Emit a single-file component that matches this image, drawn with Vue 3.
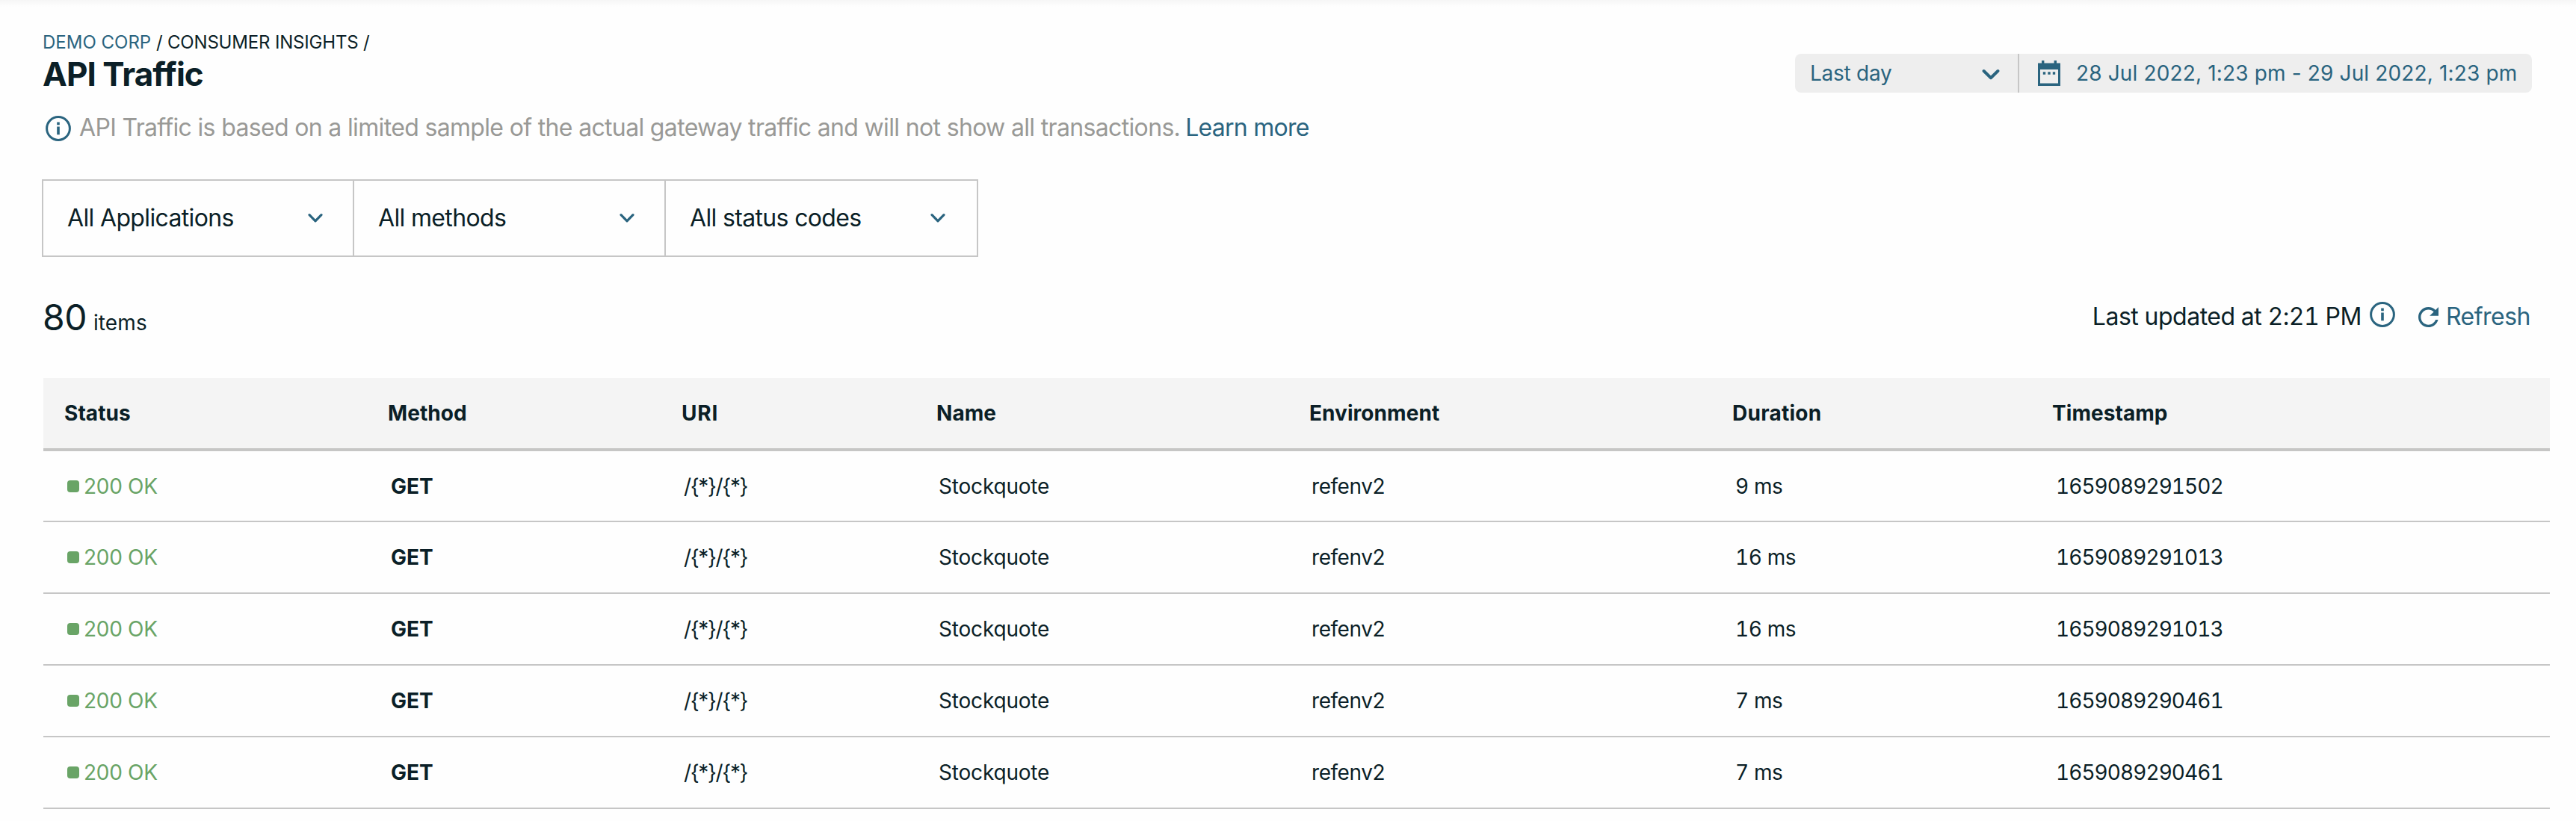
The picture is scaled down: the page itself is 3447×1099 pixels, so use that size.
<script setup>
const filters = [
  { label: 'All Applications', cls: 'apps' },
  { label: 'All methods', cls: 'methods' },
  { label: 'All status codes', cls: 'codes' },
]

const columns = ['Status', 'Method', 'URI', 'Name', 'Environment', 'Duration', 'Timestamp']

const base = { status: '200 OK', method: 'GET', uri: '/{*}/{*}', name: 'Stockquote', env: 'refenv2' }
const rows = [
  { ...base, duration: '9 ms', time: '1659089291502' },
  { ...base, duration: '16 ms', time: '1659089291013' },
  { ...base, duration: '16 ms', time: '1659089291013' },
  { ...base, duration: '7 ms', time: '1659089290461' },
  { ...base, duration: '7 ms', time: '1659089290461' },
]
</script>

<template>
  <div class="page">
    <header class="top">
      <div class="heading">
        <nav class="crumbs"><a class="link">DEMO CORP</a> <span class="trail">/ CONSUMER INSIGHTS /</span></nav>
        <h1>API Traffic</h1>
      </div>
      <div class="picker">
        <div class="range">
          <span>Last day</span>
          <svg class="chev-lg" width="24" height="16" viewBox="0 0 24 16">
            <path d="M2.6 3 12 12.2 21.4 3" fill="none" stroke="currentColor" stroke-width="4" stroke-linecap="round" stroke-linejoin="round" />
          </svg>
        </div>
        <div class="dates">
          <svg width="30" height="34" viewBox="0 0 30 34" fill="currentColor">
            <path fill-rule="evenodd" d="M5 0h3.4v3.6h13.2V0H25v3.6h5V34H0V3.6h5zM3 12v18.6h24V12z" />
            <path d="M6.8 15.2h3.4v3.6H6.8zM13.3 15.2h3.4v3.6h-3.4zM19.8 15.2h3.4v3.6h-3.4z" />
          </svg>
          <span>28 Jul 2022, 1:23 pm - 29 Jul 2022, 1:23 pm</span>
        </div>
      </div>
    </header>

    <div class="notice">
      <svg class="info" width="34" height="34" viewBox="0 0 34 34">
        <circle cx="17" cy="17" r="15.4" fill="none" stroke="currentColor" stroke-width="3" />
        <path d="M15.2 8.6h3.6v3.6h-3.6zM15.2 14.4h3.6v10.8h-3.6z" fill="currentColor" />
      </svg>
      <span class="notice-text">API Traffic is based on a limited sample of the actual gateway traffic and will not show all transactions.</span>
      <a class="link learn">Learn more</a>
    </div>

    <div class="filters">
      <div v-for="f in filters" :key="f.cls" class="filter" :class="f.cls">
        <span>{{ f.label }}</span>
        <svg width="20" height="14" viewBox="0 0 20 14">
          <path d="M2 2.6 10 10.8 18 2.6" fill="none" stroke="currentColor" stroke-width="3.2" stroke-linecap="round" stroke-linejoin="round" />
        </svg>
      </div>
    </div>

    <div class="summary">
      <div class="count"><span class="num">80</span><span class="unit">items</span></div>
      <div class="updated">
        <span class="when">Last updated at 2:21 PM</span>
        <svg class="info" width="34" height="34" viewBox="0 0 34 34">
          <circle cx="17" cy="17" r="15.4" fill="none" stroke="currentColor" stroke-width="3" />
          <path d="M15.2 8.6h3.6v3.6h-3.6zM15.2 14.4h3.6v10.8h-3.6z" fill="currentColor" />
        </svg>
        <svg class="reload" width="27" height="27" viewBox="4 4 16 16">
          <path fill="currentColor" d="M17.65 6.35C16.2 4.9 14.21 4 12 4c-4.42 0-7.99 3.58-7.99 8s3.57 8 7.99 8c3.73 0 6.84-2.55 7.73-6h-2.08c-.82 2.33-3.04 4-5.65 4-3.31 0-6-2.69-6-6s2.69-6 6-6c1.66 0 3.14.69 4.22 1.78L13 11h7V4l-2.35 2.35z" />
        </svg>
        <a class="link refresh">Refresh</a>
      </div>
    </div>

    <div class="table">
      <div class="row head">
        <div v-for="c in columns" :key="c" :class="'h-' + c.toLowerCase()">{{ c }}</div>
      </div>
      <div v-for="(r, i) in rows" :key="i" class="row">
        <div class="status"><i class="dot"></i><span>{{ r.status }}</span></div>
        <div class="method">{{ r.method }}</div>
        <div class="uri">{{ r.uri }}</div>
        <div class="name">{{ r.name }}</div>
        <div class="env">{{ r.env }}</div>
        <div class="duration">{{ r.duration }}</div>
        <div class="time">{{ r.time }}</div>
      </div>
    </div>
  </div>
</template>

<style>
body { background: #fefefe; }
</style>

<style scoped>
.page {
  box-sizing: border-box;
  width: 3447px;
  height: 1099px;
  overflow: hidden;
  padding: 41px 35px 0 58px;
  background: linear-gradient(#f6f6f6, #fefefe 9px);
  color: #0b1f27;
  font-family: Inter, "Liberation Sans", sans-serif;
  font-size: 28px;
  white-space: nowrap;
}
svg { display: block; flex: none; color: #2a647f; }
.link { color: #2a647f; }

.top { display: flex; justify-content: space-between; align-items: flex-start; height: 82px; padding-right: 24px; }
.crumbs { padding-top: 1px; font-size: 24px; line-height: 30px; margin-left: -1px; }
.trail { letter-spacing: -0.18px; }
h1 { margin: 3px 0 0 -1px; font-size: 44px; line-height: 48px; font-weight: 700; letter-spacing: -0.95px; }

.picker {
  display: flex;
  width: 986px;
  height: 52px;
  margin-top: 31px;
  border-radius: 8px;
  background: #eeeeee;
  color: #2a647f;
  line-height: 52px;
}
.range {
  box-sizing: border-box;
  display: flex;
  justify-content: space-between;
  align-items: center;
  width: 300px;
  padding: 0 24px 0 20px;
  border-right: 2px solid #c6c6c6;
  letter-spacing: -0.26px;
}
.chev-lg { margin-top: 3px; }
.dates { display: flex; align-items: center; gap: 21px; padding-left: 25px; letter-spacing: 0.15px; }

.notice { display: flex; align-items: center; height: 40px; margin-top: 28px; padding-left: 3px; font-size: 32px; line-height: 40px; }
.notice .info { margin-top: 1px; }
.notice-text { margin-left: 11px; color: #999996; letter-spacing: -0.66px; }
.learn { margin-left: 7px; letter-spacing: -0.75px; }

.filters { display: flex; box-sizing: border-box; width: 1253px; height: 104px; margin: 49px 0 0 -2px; border: 2px solid #c6c6c6; font-size: 32px; letter-spacing: -0.65px; }
.filter { box-sizing: border-box; display: flex; align-items: center; justify-content: space-between; padding: 0 40px 1px 32px; border-right: 2px solid #c6c6c6; }
.filter svg { margin-top: 1px; }
.apps { width: 416px; }
.methods { width: 417px; }
.codes { width: 416px; border-right: 0; padding-right: 42px; }

.summary { display: flex; justify-content: space-between; height: 162px; padding-right: 26px; box-sizing: border-box; padding-top: 52px; }
.count { display: flex; align-items: baseline; height: 58px; line-height: 58px; }
.num { font-size: 48px; margin-left: -1px; letter-spacing: -0.5px; }
.unit { margin-left: 9px; letter-spacing: 0.1px; }
.updated { display: flex; align-items: center; height: 40px; margin-top: 8px; font-size: 32px; line-height: 40px; }
.when { font-variant-numeric: tabular-nums; letter-spacing: -0.47px; }
.updated .info { margin: -6px 0 0 11px; }
.reload { margin-left: 31px; }
.refresh { margin-left: 10px; letter-spacing: -0.5px; }

.row {
  display: grid;
  grid-template-columns: 432px 393px 341px 499px 566px 429px 694px;
  align-items: center;
  box-sizing: border-box;
  width: 3354px;
  height: 96px;
  border-bottom: 2px solid #c6c6c6;
  line-height: 34px;
}
.row > div { padding-left: 32px; }
.head { height: 98px; border-bottom: 4px solid #c6c6c5; background: #f4f4f4; font-weight: 700; letter-spacing: 0.06px; }
.head > div { padding-left: 28px; }
.head > .h-method, .head > .h-duration, .head > .h-name, .head > .h-environment { padding-left: 29px; }
.head > .h-uri { padding-left: 29px; letter-spacing: 0.8px; }
.h-duration { letter-spacing: 0.25px; }
.head + .row { height: 95px; }
.status { display: flex; align-items: center; color: #69a466; letter-spacing: -0.3px; }
.dot { width: 16px; height: 16px; margin-right: 6px; border-radius: 4px; background: #69a466; }
.row > .method { padding-left: 33px; font-weight: 700; }
.row > .uri { letter-spacing: -1.35px; }
.name { letter-spacing: -0.19px; }
.env { letter-spacing: -0.45px; }
.row > .duration { padding-left: 33px; font-variant-numeric: tabular-nums; letter-spacing: -0.4px; }
.row > .time { padding-left: 33px; font-variant-numeric: tabular-nums; letter-spacing: -0.95px; }
</style>
